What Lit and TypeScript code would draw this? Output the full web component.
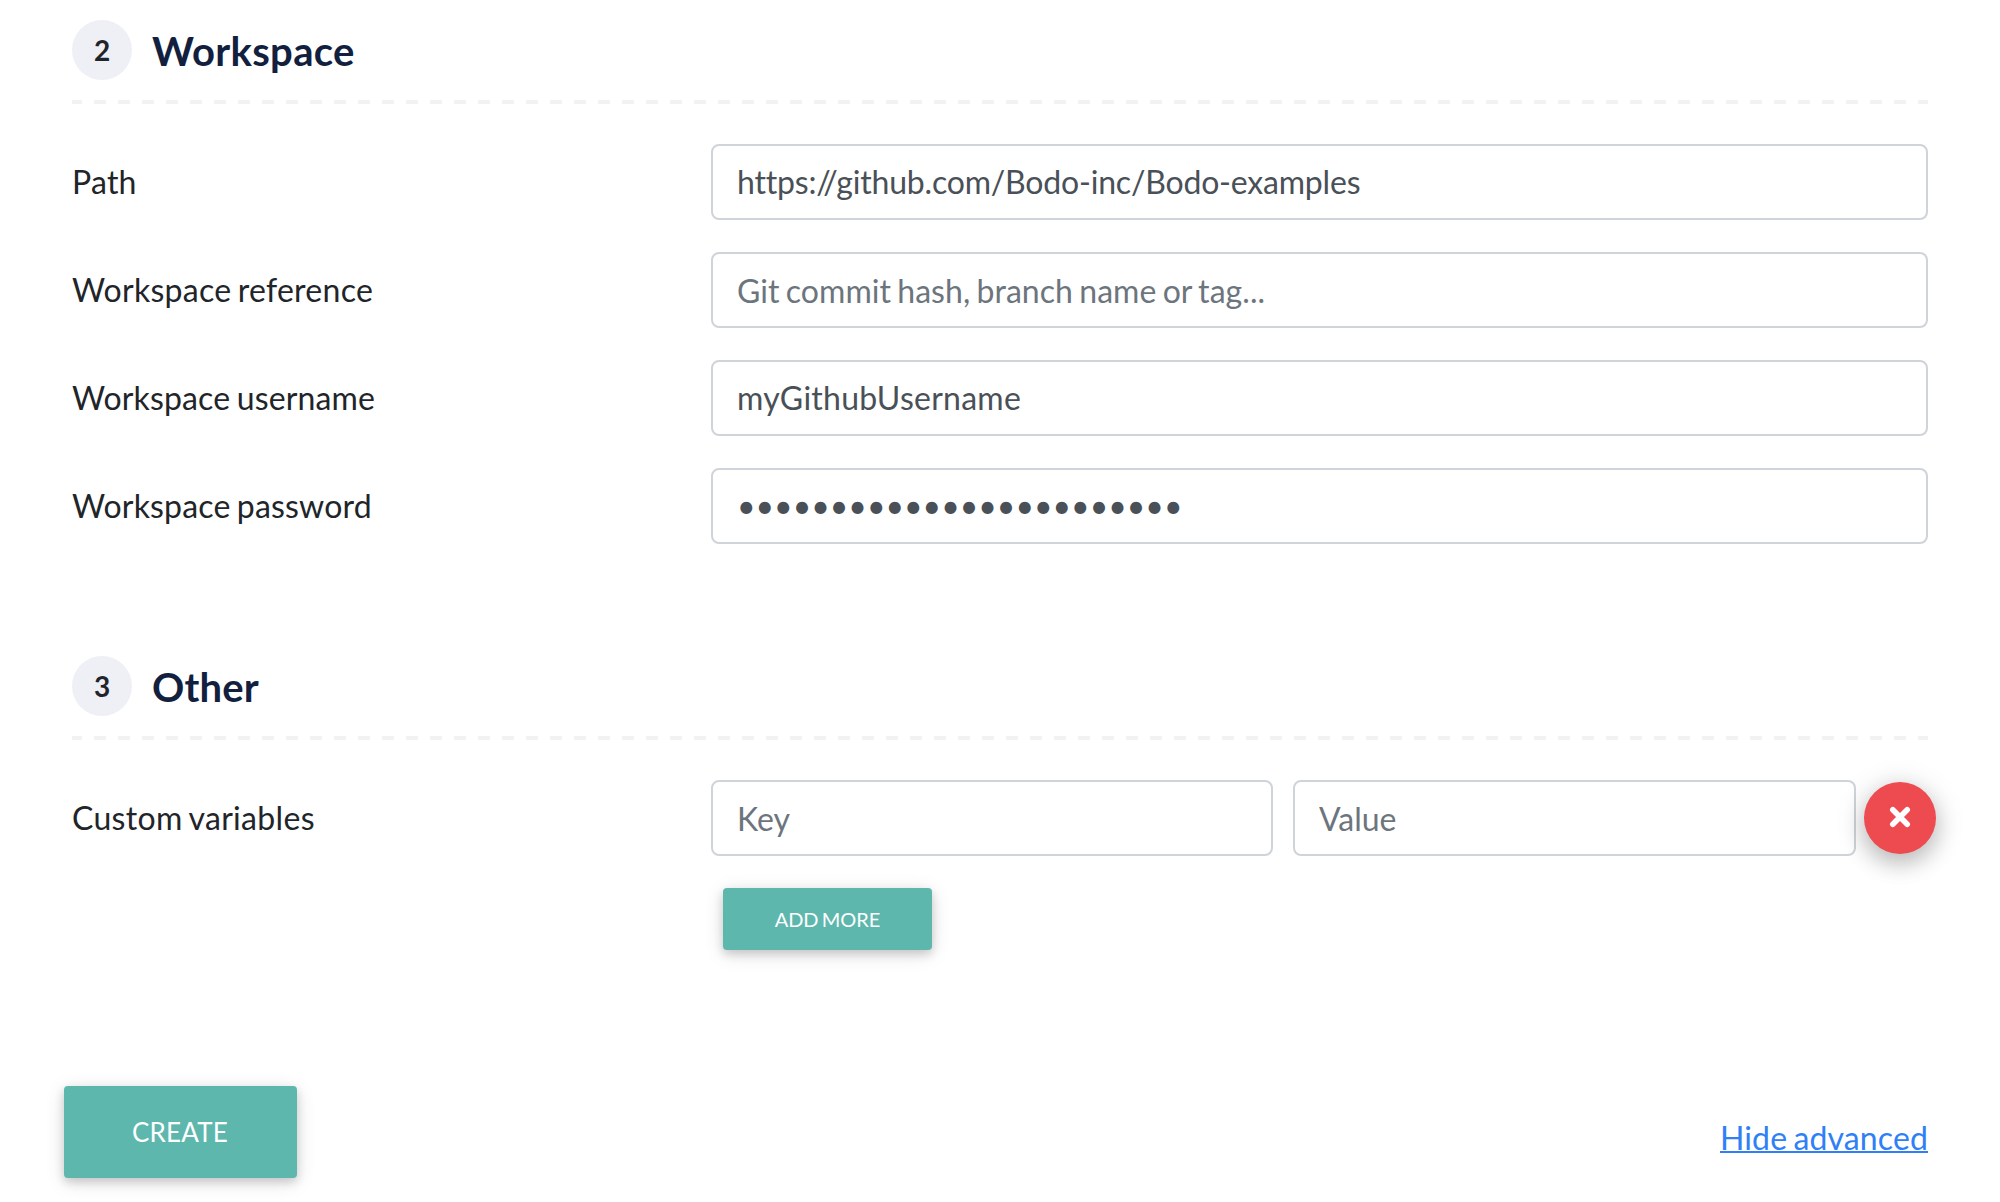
import { LitElement, html, css } from "lit";
import { customElement, property } from "lit/decorators.js";
import { styleMap } from "lit/directives/style-map.js";

const tracking = (px: number) => styleMap({ letterSpacing: `${px}px` });

@customElement("form-section")
class FormSection extends LitElement {
  @property({ type: Number }) step = 1;
  @property() heading = "";
  @property({ type: Number }) track = 0;

  static styles = css`
    :host {
      display: block;
    }
    .header {
      display: flex;
      align-items: center;
      gap: 20px;
      height: 60px;
    }
    .badge {
      display: flex;
      align-items: center;
      justify-content: center;
      width: 60px;
      height: 60px;
      border-radius: 50%;
      background: #eff0f6;
      color: #212529;
      font-size: 28px;
      font-weight: 700;
      line-height: 60px;
    }
    .title {
      margin: 0;
      padding-top: 2px;
      color: #121f3e;
      font-size: 40px;
      font-weight: 700;
      line-height: 56px;
    }
    .divider {
      height: 4px;
      margin: 20px 0 40px;
      background: repeating-linear-gradient(90deg, #f2f2f2 0 12px, transparent 12px 24px) -2px 0 / 1872px 4px;
    }
    .rows {
      display: flex;
      flex-direction: column;
      gap: 32px;
    }
  `;

  render() {
    return html`
      <div class="header">
        <span class="badge">${this.step}</span>
        <h2 class="title" style=${tracking(this.track)}>${this.heading}</h2>
      </div>
      <div class="divider"></div>
      <div class="rows"><slot></slot></div>
    `;
  }
}

interface Field {
  label: string;
  labelTrack: number;
  type: string;
  value: string;
  placeholder: string;
  track: number;
}

const FIELDS: Field[] = [
  { label: "Path", labelTrack: 0.25, type: "text", value: "https://github.com/Bodo-inc/Bodo-examples", placeholder: "", track: -0.19 },
  { label: "Workspace reference", labelTrack: 0.26, type: "text", value: "", placeholder: "Git commit hash, branch name or tag...", track: 0.05 },
  { label: "Workspace username", labelTrack: 0.15, type: "text", value: "myGithubUsername", placeholder: "", track: 0.26 },
  { label: "Workspace password", labelTrack: 0.17, type: "password", value: "x".repeat(24), placeholder: "", track: 0 },
];

@customElement("app-root")
class AppRoot extends LitElement {
  static styles = css`
    :host {
      display: block;
      box-sizing: border-box;
      height: 1202px;
      padding: 20px 72px 0;
      overflow: hidden;
      background: #fff;
      color: #212529;
      font-family: Lato, "Liberation Sans", sans-serif;
      font-size: 32px;
      line-height: 48px;
      word-spacing: -2px;
      font-variant-ligatures: none;
    }
    .other {
      margin-top: 112px;
    }
    .row {
      display: grid;
      grid-template-columns: 639px 1217px;
      align-items: center;
    }
    .label {
      line-height: 76px;
    }
    .input {
      box-sizing: border-box;
      width: 100%;
      height: 76px;
      margin: 0;
      padding: 11px 24px 13px;
      border: 2px solid #ced4da;
      border-radius: 8px;
      background: #fff;
      color: #495057;
      font: inherit;
      font-variant-ligatures: none;
      word-spacing: -2px;
      outline: none;
    }
    .input:placeholder-shown {
      padding: 12px 24px;
    }
    .input::placeholder {
      color: #6c757d;
      opacity: 1;
    }
    .pair {
      display: grid;
      grid-template-columns: 562px 563px 72px;
      column-gap: 20px;
      align-items: center;
    }
    .remove {
      display: flex;
      align-items: center;
      justify-content: center;
      width: 72px;
      height: 72px;
      margin-left: -12px;
      padding: 0;
      border: 0;
      border-radius: 50%;
      background: #ed4b50;
      box-shadow: 0 10px 22px rgba(0, 0, 0, 0.18), 0 4px 30px rgba(0, 0, 0, 0.17);
    }
    .cross {
      display: block;
      width: 22px;
      height: 22px;
      margin: -3px 1px 0 0;
    }
    .button {
      box-sizing: border-box;
      padding: 0;
      border: 0;
      border-radius: 4px;
      background: #5db7ad;
      color: #fff;
      font-family: inherit;
      word-spacing: -2px;
      box-shadow: 0 4px 10px rgba(0, 0, 0, 0.16), 0 4px 20px rgba(0, 0, 0, 0.12);
    }
    .add {
      display: block;
      width: 209px;
      height: 62px;
      margin: 32px 0 0 651px;
      font-size: 20px;
    }
    .footer {
      display: flex;
      align-items: center;
      justify-content: space-between;
      margin: 136px 0 0 -8px;
    }
    .create {
      width: 233px;
      height: 92px;
      padding-right: 1px;
      font-size: 26px;
      letter-spacing: 0.24px;
    }
    .link {
      padding-top: 12px;
      color: #2f80f7;
      letter-spacing: 0.12px;
      text-decoration: underline;
      text-decoration-thickness: 2px;
    }
  `;

  render() {
    return html`
      <form-section .step=${2} heading="Workspace" .track=${0.33}>
        ${FIELDS.map(
          (f) => html`
            <label class="row">
              <span class="label" style=${tracking(f.labelTrack)}>${f.label}</span>
              <input
                class="input"
                style=${tracking(f.track)}
                type=${f.type}
                .value=${f.value}
                placeholder=${f.placeholder}
              />
            </label>
          `,
        )}
      </form-section>
      <form-section class="other" .step=${3} heading="Other" .track=${0.15}>
        <div class="row">
          <span class="label" style=${tracking(0.33)}>Custom variables</span>
          <div class="pair">
            <input class="input" placeholder="Key" />
            <input class="input" placeholder="Value" />
            <button class="remove">
              <svg class="cross" viewBox="0 0 22 22" fill="none" stroke="#fff" stroke-width="5.6" stroke-linecap="round">
                <path d="M3.8 3.8 L18.2 18.2 M18.2 3.8 L3.8 18.2" />
              </svg>
            </button>
          </div>
        </div>
      </form-section>
      <button class="button add">ADD MORE</button>
      <div class="footer">
        <button class="button create">CREATE</button>
        <a class="link">Hide advanced</a>
      </div>
    `;
  }
}
